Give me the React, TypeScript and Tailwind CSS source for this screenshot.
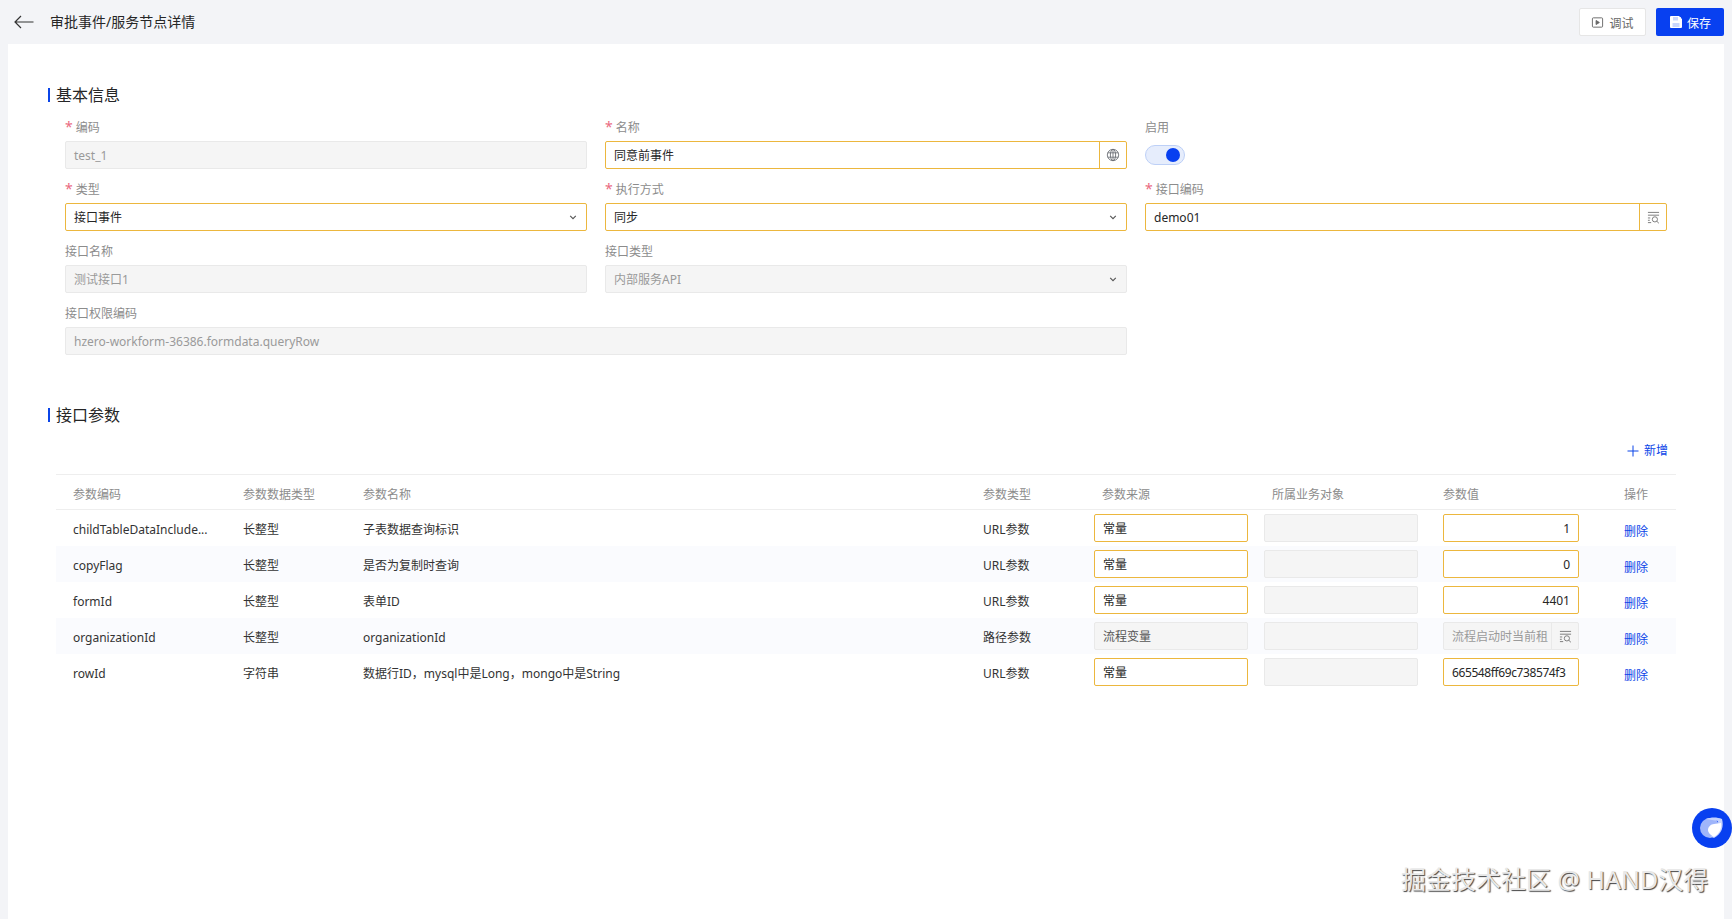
import React from "react";

const FONT = "font-['Noto_Sans','Noto_Sans_CJK_SC',sans-serif]";

function Lookup({ className = "" }: { className?: string }) {
  return (
    <svg viewBox="0 0 14 14" className={className} fill="none" stroke="currentColor" strokeWidth="1">
      <path d="M1 1.5h12" />
      <path d="M1 4.5h12" />
      <path d="M1 7.5h2.5M1 10h2M1 12.5h3.5" />
      <circle cx="8.5" cy="9" r="2.8" />
      <path d="M10.5 11l2.3 2.2" />
    </svg>
  );
}

function Globe() {
  return (
    <svg viewBox="0 0 16 16" className="h-[14px] w-[14px] text-[#6b6f76]" fill="none" stroke="currentColor" strokeWidth="1">
      <circle cx="8" cy="8" r="6.5" />
      <ellipse cx="8" cy="8" rx="3" ry="6.5" />
      <path d="M8 1.5v13M2 5.5h12M2 10.5h12" />
    </svg>
  );
}

function Chevron() {
  return (
    <svg viewBox="0 0 10 10" className="h-[10px] w-[10px] text-[#555]" fill="none" stroke="currentColor" strokeWidth="1.1">
      <path d="M2.2 3.8L5 6.6l2.8-2.8" />
    </svg>
  );
}

function Label({ text, required }: { text: string; required?: boolean }) {
  return (
    <div className="flex h-[20px] items-center text-[12px] text-[#8c8c8c]">
      {required && <span className="mr-[3px] mb-[3px] text-[14px] leading-[14px] text-[#ea6a80]">*</span>}
      {text}
    </div>
  );
}

function Input({
  value,
  kind,
  chevron,
  suffix,
  dark,
}: {
  value: string;
  kind: "active" | "disabled";
  chevron?: boolean;
  suffix?: React.ReactNode;
  dark?: boolean;
}) {
  const active = kind === "active";
  return (
    <div
      className={`flex h-[28px] items-center rounded-[2px] border text-[12px] ${
        active ? "border-[#ecb73e] bg-white text-[#262626]" : `border-[#e9e9e9] bg-[#f5f5f5] ${dark ? "text-[#555555]" : "text-[#9a9a9a]"}`
      }`}
    >
      <span className="min-w-0 flex-1 overflow-hidden pt-[2px] pl-[8px] whitespace-nowrap">{value}</span>
      {chevron && (
        <span className="mr-[8px] flex">
          <Chevron />
        </span>
      )}
      {suffix && (
        <span
          className={`flex h-full w-[27px] shrink-0 items-center justify-center border-l ${
            active ? "border-[#ecb73e]" : "border-[#e9e9e9]"
          }`}
        >
          {suffix}
        </span>
      )}
    </div>
  );
}

function Field({ label, required, children, className = "" }: { label: string; required?: boolean; children: React.ReactNode; className?: string }) {
  return (
    <div className={`flex h-[62px] flex-col ${className}`}>
      <div className="mt-[5px] mb-[3px]">
        <Label text={label} required={required} />
      </div>
      {children}
    </div>
  );
}

function SectionTitle({ children }: { children: React.ReactNode }) {
  return (
    <div className="flex h-[20px] items-center">
      <span className="mr-[6px] h-[14px] w-[2px] bg-[#0b45e8]" />
      <span className="text-[16px] leading-[20px] text-[#262626]">{children}</span>
    </div>
  );
}

const GRID = "grid grid-cols-[170px_120px_620px_120px_170px_170px_170px_80px] items-center";

type Row = { code: string; dtype: string; name: string; ptype: string; source: string; val: string };
const ROWS: Row[] = [
  { code: "childTableDataInclude...", dtype: "长整型", name: "子表数据查询标识", ptype: "URL参数", source: "常量", val: "1" },
  { code: "copyFlag", dtype: "长整型", name: "是否为复制时查询", ptype: "URL参数", source: "常量", val: "0" },
  { code: "formId", dtype: "长整型", name: "表单ID", ptype: "URL参数", source: "常量", val: "4401" },
  { code: "organizationId", dtype: "长整型", name: "organizationId", ptype: "路径参数", source: "流程变量", val: "流程启动时当前租" },
  { code: "rowId", dtype: "字符串", name: "数据行ID，mysql中是Long，mongo中是String", ptype: "URL参数", source: "常量", val: "665548ff69c738574f3" },
];

export default function App() {
  return (
    <div className={`${FONT} relative h-[919px] w-[1732px] overflow-hidden bg-[#f3f4f7]`}>
      <header className="flex h-[44px] items-center pl-[14px] pr-[8px]">
        <svg viewBox="0 0 20 14" className="h-[14px] w-[20px] text-[#333]" fill="none" stroke="currentColor" strokeWidth="1.2">
          <path d="M19.5 7H1M7 1L1 7l6 6" />
        </svg>
        <span className="ml-[16px] flex-1 pb-[2px] text-[14px] text-[#262626]">审批事件/服务节点详情</span>
        <button className="flex h-[28px] w-[67px] items-center justify-center gap-[5px] rounded-[2px] border border-[#e6e6e6] bg-white text-[12px] text-[#666]">
          <svg viewBox="0 0 14 14" className="h-[13px] w-[13px]" fill="none" stroke="currentColor" strokeWidth="1">
            <rect x="1.5" y="2" width="11" height="10" rx="1" />
            <path d="M5.5 4.8v4.4L9 7z" fill="currentColor" />
          </svg>
          <span className="pt-[3px]">调试</span>
        </button>
        <button className="ml-[10px] flex h-[28px] w-[68px] items-center justify-center gap-[4px] rounded-[2px] bg-[#0840f0] text-[12px] text-white">
          <svg viewBox="0 0 14 14" className="h-[14px] w-[14px]">
            <rect x="2" y="2" width="10" height="10" fill="#c9d6fd" />
            <path fill="#ffffff" fillRule="evenodd" d="M2 1h8l3 3v8a1 1 0 0 1-1 1H2a1 1 0 0 1-1-1V2a1 1 0 0 1 1-1zm2 1v3.5h5V2H4zM3.5 8v4h7V8h-7z" />
          </svg>
          <span className="pt-[3px]">保存</span>
        </button>
      </header>

      <main className="mx-[8px] h-[875px] bg-white pt-[41px] pl-[40px]">
        <SectionTitle>基本信息</SectionTitle>
        <div className="mt-[8px] ml-[17px] grid w-[1602px] grid-cols-[522px_522px_522px] gap-x-[18px]">
          <Field label="编码" required>
            <Input value="test_1" kind="disabled" />
          </Field>
          <Field label="名称" required>
            <Input value="同意前事件" kind="active" suffix={<Globe />} />
          </Field>
          <Field label="启用">
            <div className="flex h-[28px] items-center">
              <span className="flex h-[20px] w-[40px] items-center justify-end rounded-full border border-[#bdd0f7] bg-[#e6edfc] pr-[4px]">
                <span className="h-[14px] w-[14px] rounded-full bg-[#0840f0]" />
              </span>
            </div>
          </Field>
          <Field label="类型" required>
            <Input value="接口事件" kind="active" chevron />
          </Field>
          <Field label="执行方式" required>
            <Input value="同步" kind="active" chevron />
          </Field>
          <Field label="接口编码" required>
            <Input value="demo01" kind="active" suffix={<Lookup className="h-[13px] w-[13px] text-[#777]" />} />
          </Field>
          <Field label="接口名称">
            <Input value="测试接口1" kind="disabled" />
          </Field>
          <Field label="接口类型">
            <Input value="内部服务API" kind="disabled" chevron />
          </Field>
          <div />
          <Field label="接口权限编码" className="col-span-2">
            <Input value="hzero-workform-36386.formdata.queryRow" kind="disabled" />
          </Field>
        </div>

        <div className="mt-[44px]">
          <SectionTitle>接口参数</SectionTitle>
        </div>

        <div className="mt-[3px] ml-[8px] w-[1620px]">
          <div className="flex h-[46px] items-center justify-end pr-[8px] text-[12px] text-[#0b45e8]">
            <svg viewBox="0 0 12 12" className="mr-[5px] h-[12px] w-[12px]" fill="none" stroke="currentColor" strokeWidth="1">
              <path d="M6 .5v11M.5 6h11" />
            </svg>
            新增
          </div>
          <div className={`${GRID} h-[36px] border-y border-[#eeeeee] pt-[5px] text-[12px] text-[#8c8c8c]`}>
            <div className="pl-[17px]">参数编码</div>
            <div className="pl-[17px]">参数数据类型</div>
            <div className="pl-[17px]">参数名称</div>
            <div className="pl-[17px]">参数类型</div>
            <div className="pl-[16px]">参数来源</div>
            <div className="pl-[16px]">所属业务对象</div>
            <div className="pl-[17px]">参数值</div>
            <div className="pl-[28px]">操作</div>
          </div>
          {ROWS.map((r, i) => {
            const locked = r.source === "流程变量";
            const long = r.val.length > 10 && !locked;
            return (
              <div key={r.code} className={`${GRID} h-[36px] text-[12px] text-[#333] ${i % 2 === 1 ? "bg-[#fafbfe]" : "bg-white"}`}>
                <div className="pt-[4px] pl-[17px]">{r.code}</div>
                <div className="pt-[4px] pl-[17px]">{r.dtype}</div>
                <div className="pt-[4px] pl-[17px]">{r.name}</div>
                <div className="pt-[4px] pl-[17px]">{r.ptype}</div>
                <div className="pl-[8px] pr-[8px]">
                  <Input value={r.source} kind={locked ? "disabled" : "active"} dark={locked} />
                </div>
                <div className="pl-[8px] pr-[8px]">
                  <Input value="" kind="disabled" />
                </div>
                <div className="pl-[17px] pr-[17px]">
                  {locked ? (
                    <Input value={r.val} kind="disabled" suffix={<Lookup className="h-[13px] w-[13px] text-[#777]" />} />
                  ) : long ? (
                    <div className="flex h-[28px] items-center overflow-hidden rounded-[2px] border border-[#ecb73e] bg-white px-[8px] pt-[2px] text-[12px] tracking-[-0.4px] whitespace-nowrap text-[#262626]">
                      {r.val}
                    </div>
                  ) : (
                    <div className="flex h-[28px] items-center justify-end rounded-[2px] border border-[#ecb73e] bg-white px-[8px] pt-[2px] text-[12px] text-[#262626]">
                      {r.val}
                    </div>
                  )}
                </div>
                <div className="pt-[8px] pl-[28px] text-[#0b45e8]">删除</div>
              </div>
            );
          })}
        </div>
      </main>

      <div className="absolute top-[808px] left-[1692px] flex h-[40px] w-[40px] items-center justify-center rounded-full bg-[#0840f0]">
        <svg viewBox="0 0 30 30" className="h-[30px] w-[30px]">
          <circle cx="13" cy="15" r="10" fill="#9fb5fa" />
          <path d="M9 6c5-2 11-2 16 0 2 7 0 15-8 19l-4-2c5-1 9-7 8-15-4-1-8-1-12-2z" fill="#c4d2fd" />
          <path d="M11 17c0-3 3-6 6-6 2 0 5-1 7-1 1 6-2 11-7 14-3-2-6-4-6-7z" fill="#ffffff" />
        </svg>
      </div>

      <div className="absolute top-[864px] left-[1401px] text-[25px] leading-[30px] whitespace-nowrap text-[#e8e8e8] [text-shadow:1px_1px_1px_#444]">
        掘金技术社区 @ HAND汉得
      </div>
    </div>
  );
}
